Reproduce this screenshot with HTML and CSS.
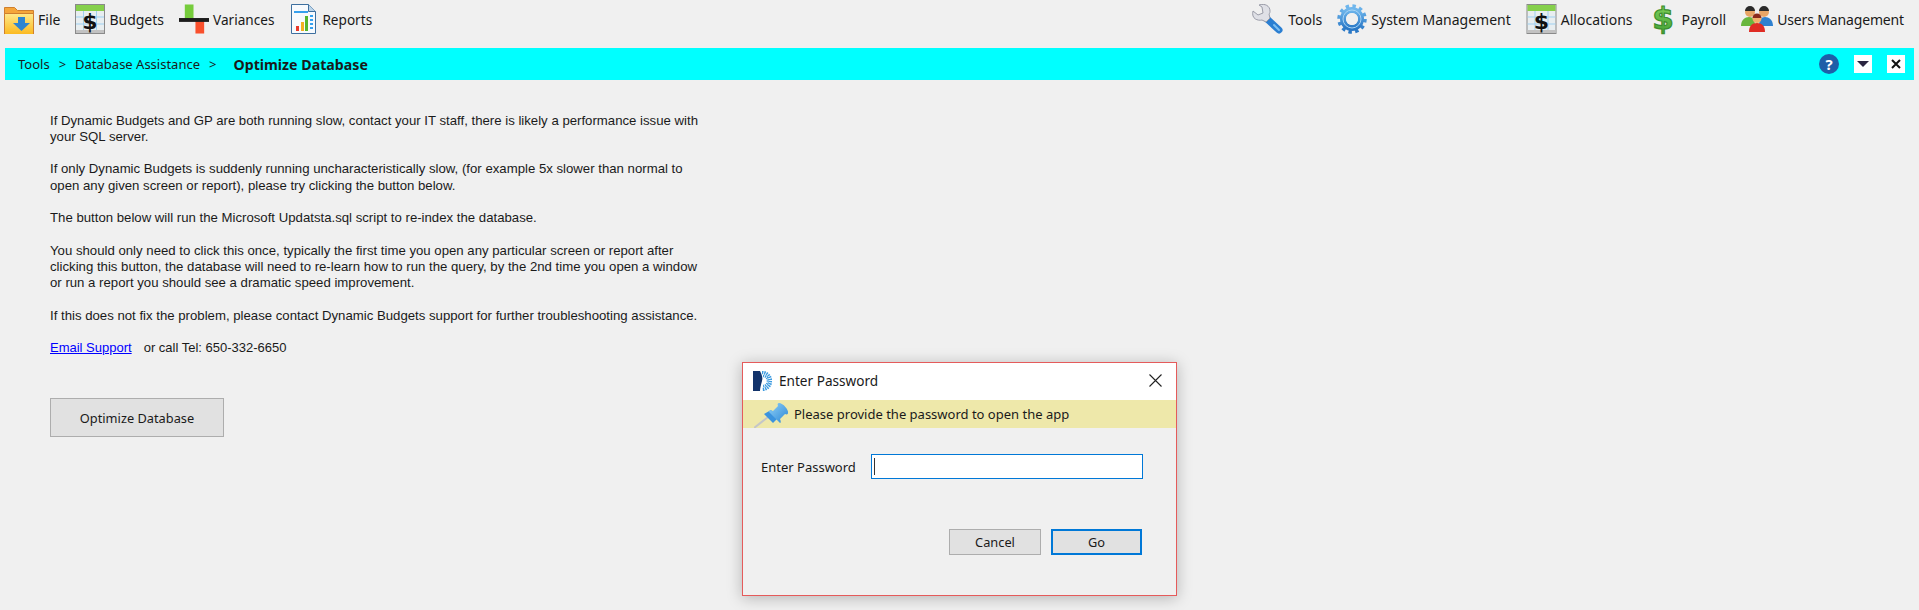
FILE: index.html
```html
<!DOCTYPE html>
<html>
<head>
<meta charset="utf-8">
<title>Optimize Database</title>
<link rel="stylesheet" href="styles.css">
</head>
<body>
  <svg class="defs" width="0" height="0">
    <defs>
      <linearGradient id="folderFill" x1="0" y1="0" x2="0" y2="1"><stop offset="0" stop-color="#ffe98a"/><stop offset="1" stop-color="#fbb91f"/></linearGradient>
      <linearGradient id="gearFill" x1="0" y1="0" x2="0" y2="1"><stop offset="0" stop-color="#6fb6ec"/><stop offset="1" stop-color="#2a78c6"/></linearGradient>
      <linearGradient id="moneyFill" x1="0" y1="0" x2="0" y2="1"><stop offset="0" stop-color="#8ad85e"/><stop offset="1" stop-color="#3f9e34"/></linearGradient>
      <linearGradient id="pinFill" x1="0" y1="0" x2="1" y2="1"><stop offset="0" stop-color="#8fd0f7"/><stop offset="1" stop-color="#2b87d6"/></linearGradient>
    </defs>
  </svg>

  <div class="toolbar">
    <div class="menu-group">
      <span class="menu-item">
        <svg class="ico" width="30" height="30" viewBox="0 0 30 30"><path d="M.5 3.5h10l3 3h16v24H.5z" fill="#f5a63a" stroke="#cf7f2e"/><path d="M.5 9.5h29v21H.5z" fill="url(#folderFill)" stroke="#cf7f2e"/><path d="M14 13h7v6h5l-8.500 8-8.500-8h5z" fill="#2d85d2"/></svg>
        File
      </span>
      <span class="menu-item">
        <svg class="ico" width="30" height="30" viewBox="0 0 30 30"><rect x=".5" y=".5" width="29" height="29" fill="#e8eef0" stroke="#8a8a8a"/><rect x="1" y="1" width="28" height="6" fill="#86d04c"/><path d="M1 13h28M1 20h28M8.500 7v22M21.500 7v22" stroke="#9fd0f0"/><rect x="1" y="26" width="28" height="3" fill="#c2c2c2"/><text x="15" y="24.500" class="dollar">$</text></svg>
        Budgets
      </span>
      <span class="menu-item variances">
        <svg class="ico" width="30" height="30" viewBox="0 0 31 30"><rect x="6" y="0" width="9" height="15" fill="#76cc3c"/><rect x="17" y="17" width="9" height="13" fill="#f9502c"/><rect x="0" y="14" width="31" height="4" fill="#1c1c1c"/></svg>
        Variances
      </span>
      <span class="menu-item report">
        <svg class="ico" width="25" height="30" viewBox="0 0 25 30"><path d="M.5.5h17l7 7v22H.500z" fill="#f7fafd" stroke="#3d6f9f"/><path d="M17.500.5v7h7" fill="#bcd4e8" stroke="#3d6f9f"/><rect x="3" y="7" width="14" height="2" fill="#35a0ee"/><rect x="5" y="22" width="3" height="5" fill="#e8382a"/><rect x="10" y="18" width="3" height="9" fill="#f2b021"/><rect x="14" y="12" width="3" height="15" fill="#55b52d"/><path d="M19 12h3M19 16h3M19 20h3M19 24h3" stroke="#35a0ee" stroke-width="2"/></svg>
        Reports
      </span>
    </div>
    <div class="menu-group">
      <span class="menu-item">
        <svg class="ico" width="33" height="30" viewBox="0 0 33 30"><path d="M15 14L28 26" stroke="#2b7fd2" stroke-width="7" stroke-linecap="round"/><path d="M23 21l5 5" stroke="#7fc0f0" stroke-width="2" stroke-linecap="round"/><path d="M2 7l5 4 5-2-1-6-3-2c6-2 11 1 11 6 0 1 0 2-1 3l1 4-4 4-4-2C7 17 0 15 2 7z" fill="#dfe0e6" stroke="#9a9ca8"/></svg>
        Tools
      </span>
      <span class="menu-item">
        <svg class="ico" width="30" height="30" viewBox="0 0 30 30"><circle cx="15" cy="15" r="12.500" fill="none" stroke="url(#gearFill)" stroke-width="4.500" stroke-dasharray="3.300 3.250"/><circle cx="15" cy="15" r="9" fill="none" stroke="url(#gearFill)" stroke-width="6"/><circle cx="15" cy="15" r="9" fill="none" stroke="#a8d4f5" stroke-width="1"/><circle cx="15" cy="15" r="6" fill="#f0f0f0"/></svg>
        System Management
      </span>
      <span class="menu-item">
        <svg class="ico" width="31" height="30" viewBox="0 0 30 30"><rect x=".5" y=".5" width="29" height="29" fill="#e8eef0" stroke="#8a8a8a"/><rect x="1" y="1" width="28" height="6" fill="#86d04c"/><path d="M1 13h28M1 20h28M8.500 7v22M21.500 7v22" stroke="#9fd0f0"/><rect x="1" y="26" width="28" height="3" fill="#c2c2c2"/><text x="15" y="24.500" class="dollar">$</text></svg>
        Allocations
      </span>
      <span class="menu-item payroll">
        <svg class="ico" width="26" height="38" viewBox="0 0 26 38"><text x="13" y="29" class="dollar-big">$</text></svg>
        Payroll
      </span>
      <span class="menu-item users">
        <svg class="ico" width="32" height="26" viewBox="0 0 32 26"><circle cx="9" cy="6" r="5" fill="#e8a566"/><path d="M4 5a5 5 0 0 1 10 0z" fill="#2a2a2a"/><circle cx="23" cy="6" r="5" fill="#e8a566"/><path d="M18 5a5 5 0 0 1 10 0z" fill="#2a2a2a"/><path d="M0 20c0-6 4-9 8-9s6 3 6 9z" fill="#68b63e"/><path d="M18 20c0-6 2-9 6-9s8 3 8 9z" fill="#2f80cf"/><circle cx="16" cy="12.500" r="4.500" fill="#f2b06c"/><path d="M11.500 12a4.500 4.500 0 0 1 9 0z" fill="#8a2a1c"/><path d="M8 26c0-6 3-9 8-9s8 3 8 9z" fill="#df2c24"/></svg>
        Users Management
      </span>
    </div>
  </div>

  <div class="crumb-bar">
    <div class="crumbs">
      <span>Tools</span><span class="sep">&gt;</span><span>Database Assistance</span><span class="sep">&gt;</span><b class="crumb-current">Optimize Database</b>
    </div>
    <div class="crumb-actions">
      <span class="help">?</span>
      <span class="square"><span class="arrow"></span></span>
      <span class="square">
        <svg width="10" height="10" viewBox="0 0 10 10"><path d="M1 1l8 8M9 1L1 9" stroke="#111" stroke-width="2"/></svg>
      </span>
    </div>
  </div>

  <div class="content">
    <p>If Dynamic Budgets and GP are both running slow, contact your IT staff, there is likely a performance issue with your SQL server.</p>
    <p>If only Dynamic Budgets is suddenly running uncharacteristically slow, (for example 5x slower than normal to open any given screen or report), please try clicking the button below.</p>
    <p>The button below will run the Microsoft Updatsta.sql script to re-index the database.</p>
    <p>You should only need to click this once, typically the first time you open any particular screen or report after clicking this button, the database will need to re-learn how to run the query, by the 2nd time you open a window or run a report you should see a dramatic speed improvement.</p>
    <p>If this does not fix the problem, please contact Dynamic Budgets support for further troubleshooting assistance.</p>
    <p class="contact"><a href="#">Email Support</a><span>or call Tel: 650-332-6650</span></p>
    <button class="btn btn-optimize">Optimize Database</button>
  </div>

  <div class="dialog">
    <div class="dialog-title">
      <svg width="19" height="20" viewBox="0 0 19 20"><path d="M0 0h7c2 4 3 7 2 10-1 4-2 7-2 10H0z" fill="#12336b"/><path d="M9 1.500a8.500 8.500 0 0 1 0 17" fill="none" stroke="#3d9be0" stroke-width="3.500" stroke-dasharray="1.400 .8"/><path d="M10 5a5 5 0 0 1 0 10" fill="none" stroke="#3d9be0" stroke-width="2.500" stroke-dasharray="1.200 .8"/></svg>
      <span class="dialog-name">Enter Password</span>
      <svg width="13" height="13" viewBox="0 0 13 13"><path d="M.5.5l12 12M12.500.5l-12 12" stroke="#222" stroke-width="1.100"/></svg>
    </div>
    <div class="dialog-note">
      <svg width="35" height="25" viewBox="0 0 35 25"><path d="M0 25l14-11" stroke="#c4c6c8" stroke-width="2"/><path d="M10 11l9 9 5-5-7-8z" fill="#3b93de"/><path d="M15 9l11 11c1 0 1-2 0-4l5-5c2 1 3 0 3-1 1-3-5-10-9-10-1 0-2 1-1 3l-5 5c-2-1-4-1-4 1z" fill="url(#pinFill)"/></svg>
      <span>Please provide the password to open the app</span>
    </div>
    <div class="dialog-body">
      <div class="field">
        <label>Enter Password</label>
        <div class="input"><span class="caret"></span></div>
      </div>
      <div class="dialog-buttons">
        <button class="btn btn-cancel">Cancel</button>
        <button class="btn btn-go">Go</button>
      </div>
    </div>
  </div>
</body>
</html>
```

FILE: styles.css
```css
html, body {
  margin: 0;
  padding: 0;
  height: 610px;
  overflow: hidden;
}
body {
  background-color: #f0f0f0;
  color: #1a1a1a;
  font-family: "Liberation Sans", Arial, sans-serif;
  font-size: 13.2px;
  position: relative;
}
.defs {
  position: absolute;
}
.toolbar {
  height: 48px;
  display: flex;
  justify-content: space-between;
  align-items: center;
  padding: 0 15px 10px 4px;
  box-sizing: border-box;
  font-family: "Noto Sans", sans-serif;
  font-size: 14px;
  white-space: nowrap;
}
.menu-group {
  display: flex;
  align-items: center;
  gap: 15px;
}
.menu-item {
  display: flex;
  align-items: center;
  gap: 4px;
}
.variances {
  font-size: 13.6px;
  margin-right: 2px;
}
.report {
  gap: 6px;
  font-size: 13.6px;
}
.payroll {
  gap: 6px;
  margin-left: 2px;
}
.users {
  letter-spacing: -0.15px;
}
.dollar {
  font: bold 22px "DejaVu Sans", sans-serif;
  text-anchor: middle;
  fill: #111;
}
.dollar-big {
  font: bold 31px "DejaVu Sans", sans-serif;
  text-anchor: middle;
  fill: url(#moneyFill);
  stroke: #3a8f2e;
  stroke-width: 1.2px;
}
.crumb-bar {
  height: 32px;
  margin: 0 5px;
  background-color: #00ffff;
  display: flex;
  justify-content: space-between;
  align-items: center;
  padding: 0 9px 0 13px;
  font-family: "Noto Sans", sans-serif;
  font-size: 13px;
}
.crumbs {
  display: flex;
  align-items: center;
}
.sep {
  margin: 0 9px;
}
.crumb-current {
  margin-left: 8px;
  font-size: 14.2px;
}
.crumb-actions {
  display: flex;
  align-items: center;
  gap: 15px;
}
.help {
  width: 20px;
  height: 20px;
  border-radius: 50%;
  background-color: #1e5fa8;
  color: #fff;
  font-weight: bold;
  font-size: 15px;
  line-height: 20px;
  text-align: center;
}
.square {
  width: 18px;
  height: 18px;
  background-color: #fff;
  display: flex;
  align-items: center;
  justify-content: center;
}
.arrow {
  border-left: 6px solid transparent;
  border-right: 6px solid transparent;
  border-top: 6px solid #2a2440;
}
.content {
  padding: 32.5px 0 0 50px;
  width: 655px;
}
.content p {
  margin: 0 0 16.25px;
  line-height: 16.25px;
}
.contact {
  font-size: 13px;
}
.contact span {
  margin-left: 12px;
}
.contact a {
  color: #0000ff;
}
.btn {
  display: block;
  font-family: "Noto Sans", sans-serif;
  font-size: 12.8px;
  background-color: #e1e1e1;
  border: 1px solid #adadad;
  color: #1a1a1a;
  padding: 0;
}
.btn-optimize {
  width: 174px;
  height: 39px;
  margin-top: 42px;
}
.dialog {
  position: absolute;
  left: 742px;
  top: 362px;
  width: 435px;
  height: 234px;
  box-sizing: border-box;
  background-color: #f0f0f0;
  border: 1px solid #e55b5b;
  box-shadow: 0 2px 14px rgba(0,0,0,0.25);
  font-family: "Noto Sans", sans-serif;
  font-size: 13px;
}
.dialog-title {
  height: 37px;
  box-sizing: border-box;
  padding: 0 14px 2px 10px;
  background-color: #fff;
  display: flex;
  align-items: center;
}
.dialog-name {
  margin-left: 7px;
  font-size: 13.6px;
  flex: 1;
}
.dialog-note {
  height: 28px;
  background-color: #eee8aa;
  display: flex;
  align-items: center;
  padding: 0 0 0 11px;
  gap: 5px;
}
.dialog-note svg {
  align-self: flex-end;
}
.dialog-body {
  padding: 26px 33px 0 18px;
}
.field {
  display: flex;
  align-items: center;
  justify-content: space-between;
}
.input {
  width: 272px;
  height: 25px;
  box-sizing: border-box;
  background-color: #fff;
  border: 1px solid #0078d7;
  display: flex;
  align-items: center;
  padding-left: 2px;
}
.caret {
  width: 1px;
  height: 17px;
  background-color: #333;
}
.dialog-buttons {
  display: flex;
  justify-content: flex-end;
  gap: 10px;
  margin: 50px 1px 0 0;
}
.btn-cancel {
  width: 92px;
  height: 26px;
}
.btn-go {
  width: 91px;
  height: 26px;
  border: 2px solid #0078d7;
}
```
